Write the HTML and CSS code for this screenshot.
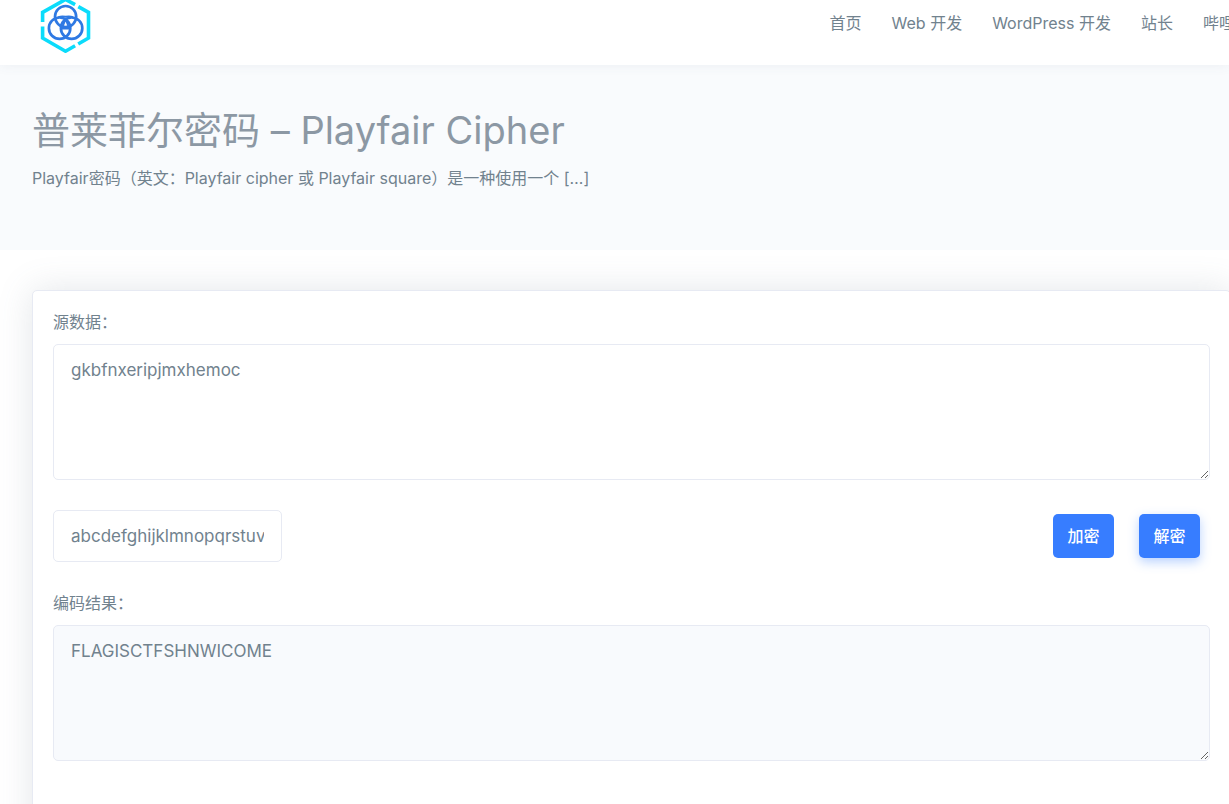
FILE: index.html
```html
<!DOCTYPE html>
<html lang="zh-CN">
<head>
  <meta charset="UTF-8" />
  <meta name="viewport" content="width=device-width, initial-scale=1" />
  <title>普莱菲尔密码 – Playfair Cipher</title>
  <link rel="stylesheet" href="styles.css">
</head>
<body>
  <header class="header">
    <a class="logo" href="#" aria-label="首页">
      <svg width="52" height="56" viewBox="0 0 52 56" fill="none">
        <g stroke="#0bdcfb" stroke-width="3.6">
          <path d="M2.6 25V15.4L25.5 2.4l9.6 5.3"/>
          <path d="M38.3 9.6l10.2 5.8V41l-10.3 6"/>
          <path d="M35.1 48.8l-9.6 5.4L2.6 41V29.4"/>
        </g>
        <g stroke="#2f79e3" stroke-width="2.7">
          <circle cx="25.6" cy="19.6" r="10.6"/>
          <circle cx="19.6" cy="31.2" r="10.7"/>
          <circle cx="31.6" cy="31.2" r="10.7"/>
          <path d="M18.4 20.2c2.4-1 4.6-1 7.2-.4 2.6-.6 4.8-.6 7.2.4M21 31.6h9.2M25.6 22l-3.6 9M25.6 22l3.6 9" stroke-width="2"/>
        </g>
      </svg>
    </a>
    <nav class="nav">
      <a href="#">首页</a>
      <a href="#">Web 开发</a>
      <a href="#">WordPress 开发</a>
      <a href="#">站长</a>
      <a href="#">哔哩哔哩</a>
    </nav>
  </header>

  <section class="banner">
    <h1>普莱菲尔密码 – Playfair Cipher</h1>
    <p>Playfair密码（英文：Playfair cipher 或 Playfair square）是一种使用一个 […]</p>
  </section>

  <main class="content">
    <form class="card">
      <label for="source">源数据：</label>
      <textarea id="source" class="control" spellcheck="false">gkbfnxeripjmxhemoc</textarea>

      <div class="toolbar">
        <input type="text" id="key" class="control" aria-label="密钥" value="abcdefghijklmnopqrstuvwxyz" spellcheck="false" />
        <div class="buttons">
          <button type="button">加密</button>
          <button type="button" class="active">解密</button>
        </div>
      </div>

      <label for="result">编码结果：</label>
      <textarea id="result" class="control" readonly>FLAGISCTFSHNWICOME</textarea>
    </form>
  </main>
</body>
</html>
```
FILE: styles.css
```css
* {
  box-sizing: border-box;
}
body {
  margin: 0;
  font-family: Inter, "Noto Sans CJK SC", sans-serif;
  font-size: 16px;
  font-weight: 400;
  line-height: 24px;
  color: #71828e;
  background: #fff;
  overflow: hidden;
}
.header {
  position: relative;
  display: flex;
  justify-content: space-between;
  height: 65px;
  padding: 0 0 0 40px;
  background: #fff;
  box-shadow: 0 0 12px rgba(80, 90, 110, 0.08);
}
.logo {
  display: block;
  margin-top: -3px;
}
.logo svg {
  display: block;
}
.nav {
  display: flex;
  gap: 30px;
  margin-right: -38px;
  padding-top: 11px;
}
.nav a {
  color: inherit;
  text-decoration: none;
  white-space: nowrap;
}
.banner {
  padding: 40px 32px 60px;
  background: #f9fbfd;
}
.banner h1 {
  margin: 0 0 11px;
  font-size: 38px;
  font-weight: 400;
  line-height: 50px;
  color: #8c98a4;
}
.banner p {
  margin: 0;
}
.content {
  padding: 40px 0 0 32px;
}
.card {
  margin-right: -2px;
  min-height: 560px;
  padding: 20px;
  border: 1px solid #e7eaf3;
  border-radius: 5px;
  background: #fff;
  box-shadow: 0 0 35px rgba(100, 115, 135, 0.18);
}
.card label {
  display: block;
  margin-bottom: 11px;
  line-height: 22px;
}
.control {
  display: block;
  border: 1px solid #e7eaf3;
  border-radius: 5px;
  padding: 12px 17px;
  font-family: inherit;
  font-size: 17px;
  line-height: 26px;
  color: #71828e;
  background: #fff;
  outline: none;
}
textarea.control {
  width: 100%;
  height: 136px;
}
textarea[readonly] {
  background: #f8fafd;
}
.toolbar {
  display: flex;
  justify-content: space-between;
  align-items: center;
  margin: 30px 0;
}
input.control {
  width: 229px;
  height: 52px;
}
.buttons {
  display: flex;
  gap: 25px;
  padding-right: 10px;
}
button {
  min-width: 61px;
  padding: 10px 14px;
  border: none;
  border-radius: 5px;
  font-family: inherit;
  font-size: 16px;
  font-weight: 500;
  line-height: 24px;
  color: #fff;
  background: #377dff;
  cursor: pointer;
}
button:hover,
button.active {
  box-shadow: 0 4px 11px rgba(55, 125, 255, 0.35);
}
```
